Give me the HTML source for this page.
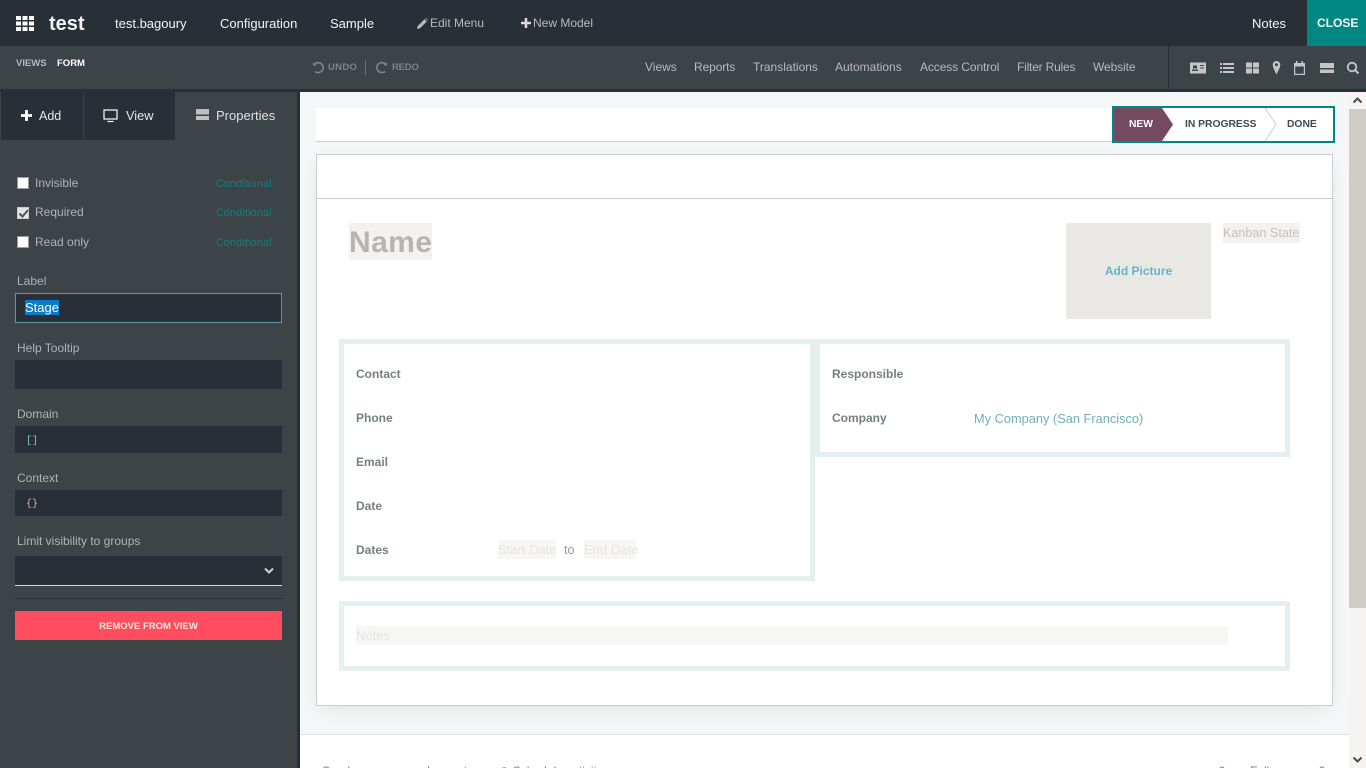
<!DOCTYPE html>
<html><head><meta charset="utf-8"><title>test</title>
<style>
html,body{margin:0;padding:0;width:1366px;height:768px;overflow:hidden;background:#f5f6f8;font-family:"Liberation Sans",sans-serif;}
div,span,svg{position:absolute;box-sizing:border-box;}
#root{left:0;top:0;width:1366px;height:768px;overflow:hidden;}
.t{white-space:nowrap;line-height:16px;}
.top{color:#f4f5f5;font-size:13px;top:16px;}
.sub{color:#b8bbbc;font-size:12px;top:59px;}
.lab{color:#b0b4b5;font-size:12px;left:17px;}
.cond{color:#008784;font-size:10.7px;left:216px;letter-spacing:.2px;}
.inp{left:15px;width:267px;background:#282f37;}
.cb{left:17px;width:12px;height:12px;background:#fff;border:1px solid #999;}
.fl{color:#74807f;font-size:12px;font-weight:bold;}
.ph{background:#f7f6f4;color:#e6e5e3;font-size:13px;line-height:20px;white-space:nowrap;}
.grp{border:5px solid #e3f0ef;background:#fff;}
</style></head><body><div id="root">

<!-- top bar -->
<div style="left:0;top:0;width:1366px;height:46px;background:#282f37"></div>
<svg style="left:16px;top:16px" width="18" height="16" viewBox="0 0 18 16" fill="#fff"><rect x="0" y="0" width="5" height="4"/><rect x="6.5" y="0" width="5" height="4"/><rect x="13" y="0" width="5" height="4"/><rect x="0" y="5.500" width="5" height="4"/><rect x="6.5" y="5.500" width="5" height="4"/><rect x="13" y="5.500" width="5" height="4"/><rect x="0" y="11" width="5" height="4"/><rect x="6.5" y="11" width="5" height="4"/><rect x="13" y="11" width="5" height="4"/></svg>
<div class="t" style="left:49px;top:13px;color:#f4f5f5;font-size:20px;line-height:22px;font-weight:bold">test</div>
<div class="t top" style="left:115px">test.bagoury</div>
<div class="t top" style="left:220px">Configuration</div>
<div class="t top" style="left:330px">Sample</div>
<svg style="left:417px;top:18px" width="11" height="11" viewBox="0 0 11 11" fill="#b8bbbc"><path d="M0 11l.7-3L7.500 1.200l2.300 2.300L3 10.300zM8.200.5l.6-.5 2.200 2.200-.6.6z"/></svg>
<div class="t" style="left:430px;top:15px;color:#b8bbbc;font-size:12px">Edit Menu</div>
<svg style="left:521px;top:18px" width="10" height="10" viewBox="0 0 10 10" fill="#d8dadb"><path d="M3.700 0h2.600v3.700H10v2.600H6.300V10H3.700V6.300H0V3.700h3.700z"/></svg>
<div class="t" style="left:533px;top:15px;color:#b8bbbc;font-size:12px">New Model</div>
<div class="t top" style="left:1252px">Notes</div>
<div style="left:1307px;top:0;width:59px;height:46px;background:#008784"></div>
<div class="t" style="left:1317px;top:15px;color:#f4f5f5;font-size:12px;font-weight:bold">CLOSE</div>

<!-- second bar -->
<div style="left:0;top:46px;width:1366px;height:43px;background:#3c4447"></div>
<div style="left:0;top:89px;width:1366px;height:3px;background:#282f37"></div>
<div class="t" style="left:16px;top:56px;color:#b4b8b9;font-size:9.500px;font-weight:bold">VIEWS</div>
<div class="t" style="left:57px;top:56px;color:#fff;font-size:9.500px;font-weight:bold">FORM</div>
<svg style="left:312px;top:61px" width="13" height="13" viewBox="0 0 13 13" fill="none" stroke="#7b8184" stroke-width="1.700"><path d="M2.500 3.200A5 5 0 1 1 3 10.500"/><path d="M1 1v3.600h3.600" fill="#7b8184" stroke="none"/></svg>
<div class="t" style="left:328px;top:60px;color:#7e8487;font-size:9.500px;font-weight:bold;letter-spacing:.3px">UNDO</div>
<div style="left:365px;top:60px;width:1px;height:15px;background:#6c7275"></div>
<svg style="left:375px;top:61px" width="13" height="13" viewBox="0 0 13 13" fill="none" stroke="#7b8184" stroke-width="1.700"><path d="M10.500 3.200A5 5 0 1 0 10 10.500"/><path d="M12 1v3.600H8.400" fill="#7b8184" stroke="none"/></svg>
<div class="t" style="left:392px;top:60px;color:#7e8487;font-size:9.500px;font-weight:bold;letter-spacing:-.2px">REDO</div>
<div class="t sub" style="left:645px">Views</div>
<div class="t sub" style="left:694px;letter-spacing:-.1px">Reports</div>
<div class="t sub" style="left:753px">Translations</div>
<div class="t sub" style="left:835px">Automations</div>
<div class="t sub" style="left:920px;letter-spacing:-.1px">Access Control</div>
<div class="t sub" style="left:1017px;letter-spacing:-.2px">Filter Rules</div>
<div class="t sub" style="left:1093px;letter-spacing:-.1px">Website</div>
<div style="left:1168px;top:46px;width:1px;height:43px;background:#282f37"></div>
<svg style="left:1190px;top:61px" width="172" height="14" viewBox="0 0 172 14" fill="#c4c6c6">
<path fill-rule="evenodd" d="M0 1.500h16v11H0zM3 4.500h4v3H3zM2 10h6V8.500H2zM10 4h4v1h-4zM10 6.500h4v1h-4z"/>
<path d="M30 2h2v2h-2zM33 2h11v2H33zM30 6h2v2h-2zM33 6h11v2H33zM30 10h2v2h-2zM33 10h11v2H33z"/>
<path d="M56 1.500h6v5h-6zM63 1.500h6v5h-6zM56 7.500h6v5h-6zM63 7.500h6v5h-6z"/>
<path fill-rule="evenodd" d="M86.500 0a3.800 3.800 0 0 1 3.800 3.800c0 2.500-3.800 9.700-3.800 9.700s-3.800-7.200-3.800-9.700A3.800 3.800 0 0 1 86.500 0zm0 2.300a1.500 1.500 0 1 0 0 3 1.500 1.500 0 0 0 0-3z"/>
<path fill-rule="evenodd" d="M104 2h2V0h1.500v2h4V0H113v2h2v12h-11zm1.200 3.500v7.300h8.600V5.500z"/>
<path d="M130 2h14v5h-14zM130 8.500h14V12h-14z"/>
<circle cx="162" cy="6" r="4.300" fill="none" stroke="#c4c6c6" stroke-width="1.800"/><path d="M165 9l3.500 3.500" stroke="#c4c6c6" stroke-width="2"/>
</svg>

<!-- sidebar -->
<div style="left:0;top:92px;width:297px;height:676px;background:#3c4447"></div>
<div style="left:297px;top:92px;width:3px;height:676px;background:#282f37"></div>
<div style="left:1px;top:92px;width:174px;height:48px;background:#282f37"></div>
<div style="left:83px;top:92px;width:1px;height:48px;background:#3c4447"></div>
<svg style="left:21px;top:110px" width="11" height="11" viewBox="0 0 10 10" fill="#fff"><path d="M3.700 0h2.600v3.700H10v2.600H6.300V10H3.700V6.300H0V3.700h3.700z"/></svg>
<div class="t" style="left:39px;top:108px;color:#e8e9e9;font-size:12.500px">Add</div>
<svg style="left:103px;top:109px" width="16" height="14" viewBox="0 0 16 14" fill="none" stroke="#fff" stroke-width="1.200"><rect x="1" y="1" width="13" height="9"/><path d="M4.500 12.500h6"/></svg>
<div class="t" style="left:126px;top:108px;color:#e8e9e9;font-size:12.800px">View</div>
<svg style="left:196px;top:109px" width="13" height="12" viewBox="0 0 13 12" fill="#bfc1c1"><path d="M0 0h13v5.500H0zM0 7h13v4H0z"/></svg>
<div class="t" style="left:216px;top:108px;color:#e0e1e1;font-size:13px">Properties</div>

<div class="cb" style="top:177px"></div>
<div class="t lab" style="left:35px;top:175px">Invisible</div>
<div class="t cond" style="top:176px">Conditional</div>
<div class="cb" style="top:207px;background:#e4e4e4;border-color:#ccc"></div>
<svg style="left:17px;top:207px" width="13" height="13" viewBox="0 0 13 13" fill="none" stroke="#555" stroke-width="2"><path d="M2.500 6.500l3 3L11 3"/></svg>
<div class="t lab" style="left:35px;top:204px">Required</div>
<div class="t cond" style="top:205px">Conditional</div>
<div class="cb" style="top:236px"></div>
<div class="t lab" style="left:35px;top:234px">Read only</div>
<div class="t cond" style="top:235px">Conditional</div>

<div class="t lab" style="top:273px">Label</div>
<div class="inp" style="top:293px;height:30px;border:1px solid #5a98a8"></div>
<div class="t" style="left:25px;top:300px;height:15px;line-height:15px;padding:0;background:#0a7bc8;color:#fff;font-size:13px">Stage</div>
<div class="t lab" style="top:340px">Help Tooltip</div>
<div class="inp" style="top:360px;height:29px"></div>
<div class="t lab" style="top:406px">Domain</div>
<div class="inp" style="top:426px;height:27px"></div>
<div class="t" style="left:26px;top:434px;color:#7fc4cf;font-size:10px;font-family:'Liberation Mono',monospace">[]</div>
<div class="t lab" style="top:470px">Context</div>
<div class="inp" style="top:490px;height:26px"></div>
<div class="t" style="left:26px;top:497px;color:#c8b8a8;font-size:10px;font-family:'Liberation Mono',monospace">{}</div>
<div class="t lab" style="top:533px">Limit visibility to groups</div>
<div class="inp" style="top:556px;height:30px;border-bottom:1px solid #d8d8d8"></div>
<svg style="left:264px;top:567px" width="10" height="8" viewBox="0 0 10 8" fill="none" stroke="#d0d2d2" stroke-width="2"><path d="M1 1.500l4 4 4-4"/></svg>
<div style="left:15px;top:598px;width:267px;height:1px;background:#282f37"></div>
<div style="left:15px;top:611px;width:267px;height:29px;background:#ff4c5e"></div>
<div class="t" style="left:15px;top:619px;width:267px;text-align:center;color:#fbe8dc;font-size:9.500px;font-weight:bold">REMOVE FROM VIEW</div>

<!-- main -->
<div style="left:300px;top:92px;width:1049px;height:676px;background:#f5f6f8"></div>
<div style="left:316px;top:108px;width:1017px;height:34px;background:#fff;border-bottom:1px solid #ccc"></div>
<div style="left:1112px;top:106px;width:223px;height:37px;background:#fff;border:2px solid #008784"></div>
<svg style="left:1114px;top:108px" width="219" height="33" viewBox="0 0 219 33"><path d="M0 0h48l11 16.500L48 33H0z" fill="#75495f"/><path d="M151 0l11 16.500L151 33" fill="none" stroke="#ccc"/></svg>
<div class="t" style="left:1129px;top:117px;color:#fff;font-size:10.300px;font-weight:bold">NEW</div>
<div class="t" style="left:1185px;top:117px;color:#3c4a52;font-size:10.300px;font-weight:bold">IN PROGRESS</div>
<div class="t" style="left:1287px;top:117px;color:#3c4a52;font-size:10.300px;font-weight:bold">DONE</div>

<div style="left:316px;top:154px;width:1017px;height:552px;background:#fff;border:1px solid #ccc;box-shadow:0 5px 20px -6px rgba(0,0,0,.12)"></div>
<div style="left:317px;top:198px;width:1015px;height:1px;background:#ccc"></div>
<div class="t" style="left:349px;top:223px;width:83px;height:37px;background:#f3f2f0;color:#b9b3ac;font-size:30px;line-height:40px;font-weight:bold;letter-spacing:.4px">Name</div>
<div style="left:1066px;top:223px;width:145px;height:96px;background:#eae8e5"></div>
<div class="t" style="left:1066px;top:263px;width:145px;text-align:center;color:#62b4c9;font-size:12px;font-weight:bold">Add Picture</div>
<div class="t" style="left:1223px;top:223px;width:77px;height:20px;background:#f3f2f0;color:#c6c1ba;font-size:12.600px;line-height:20px">Kanban State</div>

<div class="grp" style="left:339px;top:339px;width:476px;height:242px"></div>
<div class="grp" style="left:815px;top:339px;width:475px;height:118px"></div>
<div class="grp" style="left:339px;top:601px;width:951px;height:70px"></div>
<div class="t fl" style="left:356px;top:366px">Contact</div>
<div class="t fl" style="left:356px;top:410px">Phone</div>
<div class="t fl" style="left:356px;top:454px">Email</div>
<div class="t fl" style="left:356px;top:498px">Date</div>
<div class="t fl" style="left:356px;top:542px">Dates</div>
<div class="ph" style="left:498px;top:540px;width:58px;height:19px">Start Date</div>
<div class="t" style="left:564px;top:542px;color:#999;font-size:12.500px">to</div>
<div class="ph" style="left:584px;top:540px;width:52px;height:19px">End Date</div>
<div class="t fl" style="left:832px;top:366px">Responsible</div>
<div class="t fl" style="left:832px;top:410px">Company</div>
<div class="t" style="left:974px;top:411px;color:#6fb0b8;font-size:12.800px">My Company (San Francisco)</div>
<div class="ph" style="left:356px;top:626px;width:872px;height:19px">Notes</div>

<!-- chatter -->
<div style="left:300px;top:734px;width:1049px;height:34px;background:#fff;border-top:1px solid #e2e2e2"></div>
<div class="t" style="left:322px;top:763px;color:#777;font-size:12px">Send message</div>
<div class="t" style="left:427px;top:763px;color:#777;font-size:12px">Log note</div>
<div class="t" style="left:499px;top:763px;color:#777;font-size:12px">&#9719; Schedule activity</div>
<div class="t" style="left:1208px;top:763px;color:#777;font-size:12px">&#9675; 0</div>
<div class="t" style="left:1250px;top:763px;color:#777;font-size:12px">Follow</div>
<div class="t" style="left:1308px;top:763px;color:#777;font-size:12px">&#9679; 0</div>

<!-- scrollbar -->
<div style="left:1349px;top:92px;width:17px;height:676px;background:#f5f4f2"></div>
<div style="left:1349px;top:109px;width:17px;height:499px;background:#d0cdc8"></div>
<svg style="left:1352px;top:96px" width="11" height="8" viewBox="0 0 11 8" fill="none" stroke="#4a4a4a" stroke-width="2"><path d="M1.500 6.500l4-4 4 4"/></svg>
<svg style="left:1352px;top:756px" width="11" height="8" viewBox="0 0 11 8" fill="none" stroke="#4a4a4a" stroke-width="2"><path d="M1.500 1.500l4 4 4-4"/></svg>
</div></body></html>
